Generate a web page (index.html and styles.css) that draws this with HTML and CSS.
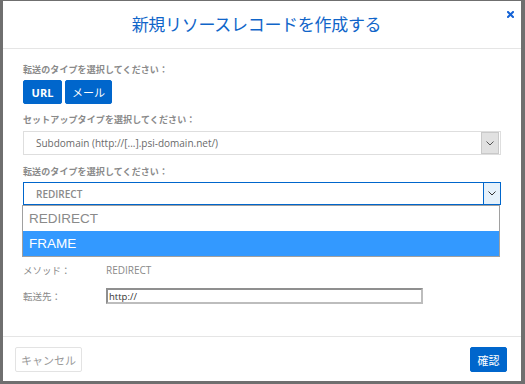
FILE: index.html
```html
<!DOCTYPE html>
<html lang="ja">
<head>
    <meta charset="UTF-8">
    <title>新規リソースレコードを作成する</title>
    <link rel="stylesheet" href="styles.css">
</head>
<body>
<div class="modal">
    <div class="modal-header">
        <h2 class="modal-title">新規リソースレコードを作成する</h2>
        <span class="close">
            <svg width="7" height="7" viewBox="0 0 7 7"><path d="M1 1L6 6M6 1L1 6" stroke="#1463d6" stroke-width="2" stroke-linecap="square"/></svg>
        </span>
    </div>
    <div class="modal-body">
        <div class="label">転送のタイプを選択してください：</div>
        <div class="btn-group">
            <button type="button" class="btn btn-primary">URL</button>
            <button type="button" class="btn btn-primary">メール</button>
        </div>

        <div class="label label-gap">セットアップタイプを選択してください：</div>
        <div class="select">
            <span class="select-text">Subdomain (http://[...].psi-domain.net/)</span>
            <span class="select-arrow">
                <svg width="8" height="5" viewBox="0 0 8 5"><path d="M0.5 0.5L4 4L7.5 0.5" fill="none" stroke="#555" stroke-width="1"/></svg>
            </span>
        </div>

        <div class="label label-gap2">転送のタイプを選択してください：</div>
        <div class="select-wrap">
            <div class="select select-open">
                <span class="select-text select-text-bold">REDIRECT</span>
                <span class="select-arrow">
                    <svg width="8" height="5" viewBox="0 0 8 5"><path d="M0.5 0.5L4 4L7.5 0.5" fill="none" stroke="#333" stroke-width="1"/></svg>
                </span>
            </div>
            <!-- 開いているドロップダウン -->
            <ul class="dropdown">
                <li>REDIRECT</li>
                <li class="active">FRAME</li>
            </ul>
        </div>

        <div class="row row-method">
            <span class="row-label">メソッド：</span>
            <span class="row-value">REDIRECT</span>
        </div>
        <div class="row row-dest">
            <span class="row-label">転送先：</span>
            <input type="text" class="dest-input" value="http://">
        </div>
    </div>
    <div class="modal-footer">
        <button type="button" class="btn btn-default">キャンセル</button>
        <button type="button" class="btn btn-primary btn-ok">確認</button>
    </div>
</div>
</body>
</html>
```

FILE: styles.css
```css
html, body {
    margin: 0;
    padding: 0;
}
body {
    background: #6f6f6f;
    font-family: "Open Sans", "Noto Sans CJK JP", sans-serif;
    height: 384px;
    overflow: hidden;
}
.modal {
    margin: 1px 4px 0 3px;
    height: 380px;
    background: #fff;
    display: flex;
    flex-direction: column;
}
.modal-header {
    position: relative;
    height: 47px;
    padding-right: 11px;
    border-bottom: 1px solid #e5e5e5;
    text-align: center;
}
.modal-title {
    margin: 0;
    font-size: 17px;
    font-weight: normal;
    line-height: 47px;
    color: #1065c9;
    letter-spacing: -0.3px;
}
.close {
    position: absolute;
    top: 10px;
    right: 7px;
    line-height: 0;
}
.modal-body {
    flex: 1;
    padding: 14px 20px 0 20px;
}
.label {
    font-size: 9px;
    font-weight: bold;
    line-height: 14px;
    color: #8a8a8a;
    letter-spacing: 0.1px;
}
.label-gap {
    margin-top: 9px;
}
.label-gap2 {
    margin-top: 10px;
}
.btn-group {
    display: flex;
    gap: 3px;
    margin-top: 3px;
}
.btn {
    font-family: "Open Sans", "Noto Sans CJK JP", sans-serif;
    border-radius: 2px;
    cursor: pointer;
    padding: 0;
}
.btn-primary {
    background: #0066cc;
    border: 1px solid #0066cc;
    color: #fff;
    font-size: 11px;
    font-weight: bold;
    height: 24px;
}
.btn-group .btn:first-child {
    width: 39px;
}
.btn-group .btn:last-child {
    width: 47px;
    font-weight: normal;
}
.select {
    margin-top: 4px;
    height: 22px;
    border: 1px solid #dedede;
    display: flex;
    align-items: center;
    justify-content: space-between;
}
.select-text {
    padding-left: 12px;
    font-size: 10px;
    color: #6a6a6a;
}
.select-text-bold {
    font-weight: 600;
    font-size: 10px;
    color: #8a8a8a;
}
.select-arrow {
    width: 16px;
    height: 20px;
    margin-right: 1px;
    background: #e1e1e1;
    border: 1px solid #c9c9c9;
    display: flex;
    align-items: center;
    justify-content: center;
}
.select-wrap {
    position: relative;
}
.select-open {
    margin-top: 3px;
    height: 21px;
    border-color: #0066cc;
}
.select-open .select-arrow {
    height: 21px;
    margin-right: 0;
    background: #e5f1fb;
    border: none;
    border-left: 1px solid #0066cc;
}
.dropdown {
    position: absolute;
    left: -1px;
    right: 1px;
    top: 23px;
    margin: 0;
    padding: 0;
    list-style: none;
    background: #fff;
    border: 1px solid #a0a0a0;
    font-family: "Liberation Sans", Arial, sans-serif;
    font-size: 13.5px;
    z-index: 2;
}
.dropdown li {
    height: 25px;
    line-height: 25px;
    padding-left: 6px;
    color: #8a8a8a;
}
.dropdown li.active {
    background: #3399ff;
    color: #fff;
}
.row {
    display: flex;
    align-items: center;
    font-size: 9.5px;
    color: #8a8a8a;
}
.row-label {
    width: 83px;
    flex-shrink: 0;
}
.row-method {
    margin-top: 58px;
    height: 14px;
}
.row-method .row-value {
    font-size: 10px;
}
.row-dest {
    margin-top: 11px;
    height: 16px;
}
.dest-input {
    box-sizing: border-box;
    width: 317px;
    height: 16px;
    padding: 0 1px;
    border: 2px solid #8f8f8f;
    border-right-color: #bdbdbd;
    border-bottom-color: #bdbdbd;
    font-family: "Open Sans", sans-serif;
    font-size: 9.5px;
    color: #333;
    outline: none;
}
.modal-footer {
    border-top: 1px solid #e5e5e5;
    padding: 10px 14px 9px 12px;
    display: flex;
    justify-content: space-between;
}
.btn-default {
    width: 67px;
    height: 25px;
    background: #fff;
    border: 1px solid #e3e3e3;
    color: #9a9a9a;
    font-size: 11px;
}
.btn-ok {
    width: 37px;
    height: 25px;
    font-weight: normal;
    font-size: 11px;
}
```
